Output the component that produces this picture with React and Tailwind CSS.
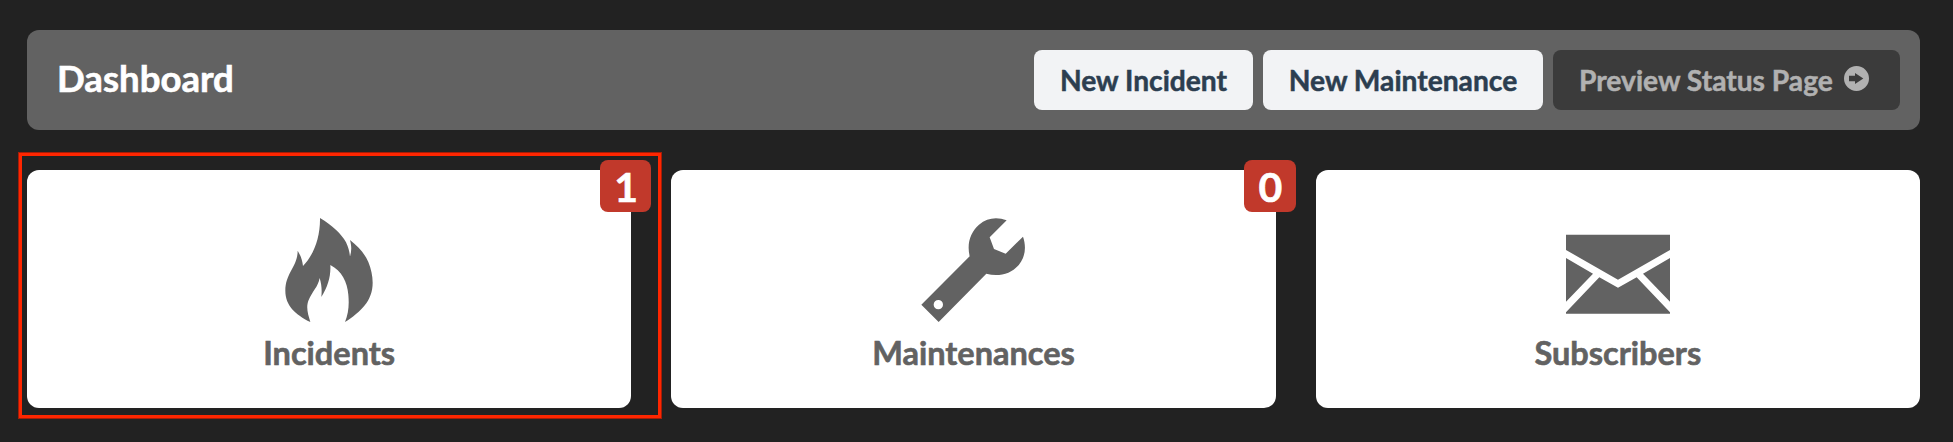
import React from 'react';

function FlameIcon() {
  return (
    <svg className="block h-[104px] w-[104px] fill-current" viewBox="111 54 312 312">
      <path d="M240 54C277 76 304 101 318 127C325 141 328 154 330 169C335 153 335 139 330 120C354 139 373 159 385 186C393 206 398 227 398 248C398 302 363 335 315 366C325 342 328 317 325 284C322 246 305 212 271 195C273 229 263 262 244 291C246 272 245 254 239 234C234 261 217 274 206 300C197 322 204 343 211 366C166 343 136 317 136 272C136 219 173 200 173 152C182 166 187 181 189 198C221 165 241 112 240 54Z" />
    </svg>
  );
}

function WrenchIcon() {
  return (
    <svg className="block h-[104px] w-[104px] fill-current" viewBox="184 54 312 312">
      <path
        fillRule="evenodd"
        d="M441 61L390 112L403 147L438 161L490 110C507 159 485 201 446 218C425 226 403 227 380 221L237 366L185 314L330 169C321 130 332 97 358 74C383 53 412 50 441 61ZM236 300A14 14 0 1 0 236 328A14 14 0 1 0 236 300Z"
      />
    </svg>
  );
}

function MailIcon() {
  return (
    <svg className="block h-[104px] w-[104px] fill-current" viewBox="198 54 312 312">
      <path d="M198 104H510V150L354 239L198 150ZM198 174L279 221L198 305ZM510 174L429 221L510 305ZM298 232L354 263L410 232L510 337V341H198V337Z" />
    </svg>
  );
}

function ArrowCircleIcon() {
  return (
    <svg className="block h-[25px] w-[25px] fill-current" viewBox="0 0 75 75">
      <path
        fillRule="evenodd"
        d="M37.5 0A37.5 37.5 0 1 1 37.5 75A37.5 37.5 0 1 1 37.5 0ZM15 29V46H33V54L58 37.5L33 21V29Z"
      />
    </svg>
  );
}

const cards = [
  { label: 'Incidents', icon: FlameIcon, count: 1, highlighted: true },
  { label: 'Maintenances', icon: WrenchIcon, count: 0 },
  { label: 'Subscribers', icon: MailIcon },
];

function Card({ label, icon: Icon, count, highlighted }) {
  return (
    <section className="relative flex h-[238px] flex-col items-center rounded-xl bg-white pt-12 text-[#626262]">
      <Icon />
      <h2 className="mt-[11px] text-[32.5px] leading-10 font-bold [-webkit-text-stroke:0.6px_currentColor]">{label}</h2>
      {count !== undefined && (
        <span className="absolute -top-2.5 -right-5 flex h-[52px] w-[51.5px] items-center justify-center rounded-lg bg-[#c1392b] pl-px text-[41px] leading-none font-bold text-white [-webkit-text-stroke:0.6px_currentColor]">
          {count}
        </span>
      )}
      {highlighted && (
        <div className="absolute -top-[18px] -right-[31px] -bottom-[11px] -left-[9px] border-4 border-[#a51d08]">
          <div className="-m-[3px] h-[calc(100%+6px)] border-[3px] border-[#ff2600]" />
        </div>
      )}
    </section>
  );
}

export default function App() {
  return (
    <main className="h-[442px] bg-[#222222] pt-[30px] pr-[33px] pl-[27px] font-['Lato',sans-serif]">
      <header className="flex h-[100px] items-center justify-between rounded-xl bg-[#626262] pr-5 pl-[30px]">
        <h1 className="-mt-[5px] text-[36.6px] leading-10 font-bold text-white [-webkit-text-stroke:0.6px_currentColor]">Dashboard</h1>
        <nav className="flex gap-2.5 text-[28.2px] leading-[60px] font-bold [-webkit-text-stroke:0.5px_currentColor]">
          <button className="h-[60px] w-[219px] rounded-lg bg-[#f2f3f5] text-[#2c3e50]">New Incident</button>
          <button className="h-[60px] w-[280px] rounded-lg bg-[#f2f3f5] text-[#2c3e50]">New Maintenance</button>
          <button className="flex h-[60px] w-[347px] items-center gap-[11px] rounded-lg bg-[#3b3b3b] pl-[26px] text-[#b1b1b1]">
            <span>Preview Status Page</span>
            <span className="-mt-[3px]"><ArrowCircleIcon /></span>
          </button>
        </nav>
      </header>
      <div className="mt-10 grid grid-cols-3 gap-10">
        {cards.map((card) => (
          <Card key={card.label} {...card} />
        ))}
      </div>
    </main>
  );
}
